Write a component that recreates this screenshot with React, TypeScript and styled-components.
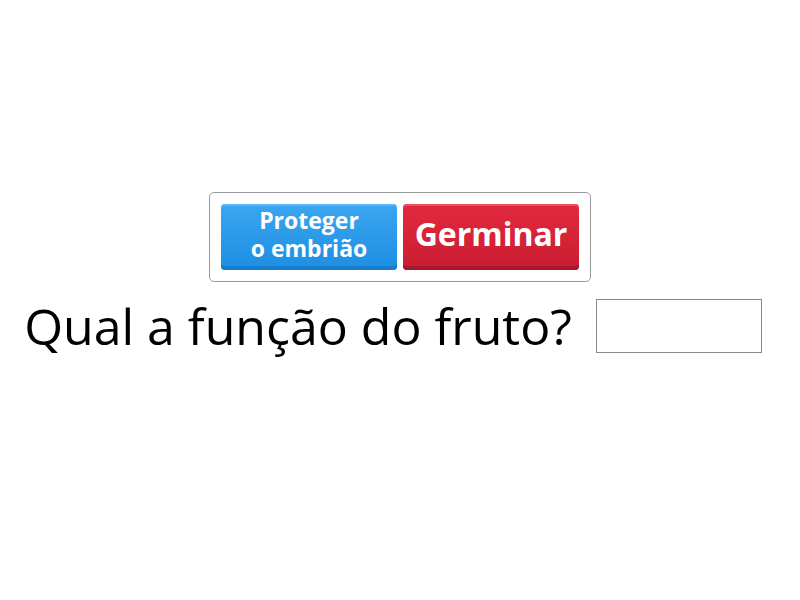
import React from "react";
import styled, { createGlobalStyle } from "styled-components";

const Global = createGlobalStyle`
  html, body {
    margin: 0;
    padding: 0;
    background: #ffffff;
    font-family: "Open Sans", "Noto Sans", sans-serif;
  }
`;

const Page = styled.div`
  width: 800px;
  height: 600px;
  display: flex;
  flex-direction: column;
  align-items: center;
  padding-top: 192px;
  box-sizing: border-box;
`;

const Tray = styled.div`
  display: flex;
  gap: 6px;
  padding: 11px;
  border: 1px solid #9a9a9a;
  border-radius: 5px;
  background: #fff;
`;

const Tile = styled.div<{ $tone: "blue" | "red"; $size: number; $lh: number }>`
  width: 176px;
  height: 66px;
  box-sizing: border-box;
  display: flex;
  align-items: center;
  justify-content: center;
  text-align: center;
  border-radius: 4px;
  color: #fff;
  font-weight: 700;
  font-size: ${({ $size }) => $size}px;
  line-height: ${({ $lh }) => $lh}px;
  padding-bottom: 6px;
  background: ${({ $tone }) =>
    $tone === "blue"
      ? "linear-gradient(#3ba6f0, #1d8ee2)"
      : "linear-gradient(#e22a3f, #c91c30)"};
  box-shadow: inset 0 -4px 0
      ${({ $tone }) => ($tone === "blue" ? "#167ccb" : "#a9172a")},
    inset 0 2px 0
      ${({ $tone }) => ($tone === "blue" ? "#5ab8f6" : "#ea5062")};
`;

const Question = styled.div`
  display: flex;
  align-items: center;
  gap: 24px;
  margin-top: 17px;
  margin-right: 14px;
`;

const Prompt = styled.span`
  font-size: 50px;
  color: #000;
  line-height: 54px;
`;

const Slot = styled.div`
  width: 166px;
  height: 54px;
  box-sizing: border-box;
  border: 1px solid #8a8a8a;
  background: #fff;
`;

export default function App() {
  return (
    <>
      <Global />
      <Page>
        <Tray>
          <Tile $tone="blue" $size={23} $lh={28}>
            Proteger
            <br />o embrião
          </Tile>
          <Tile $tone="red" $size={32} $lh={40}>
            Germinar
          </Tile>
        </Tray>
        <Question>
          <Prompt>Qual a função do fruto?</Prompt>
          <Slot />
        </Question>
      </Page>
    </>
  );
}
